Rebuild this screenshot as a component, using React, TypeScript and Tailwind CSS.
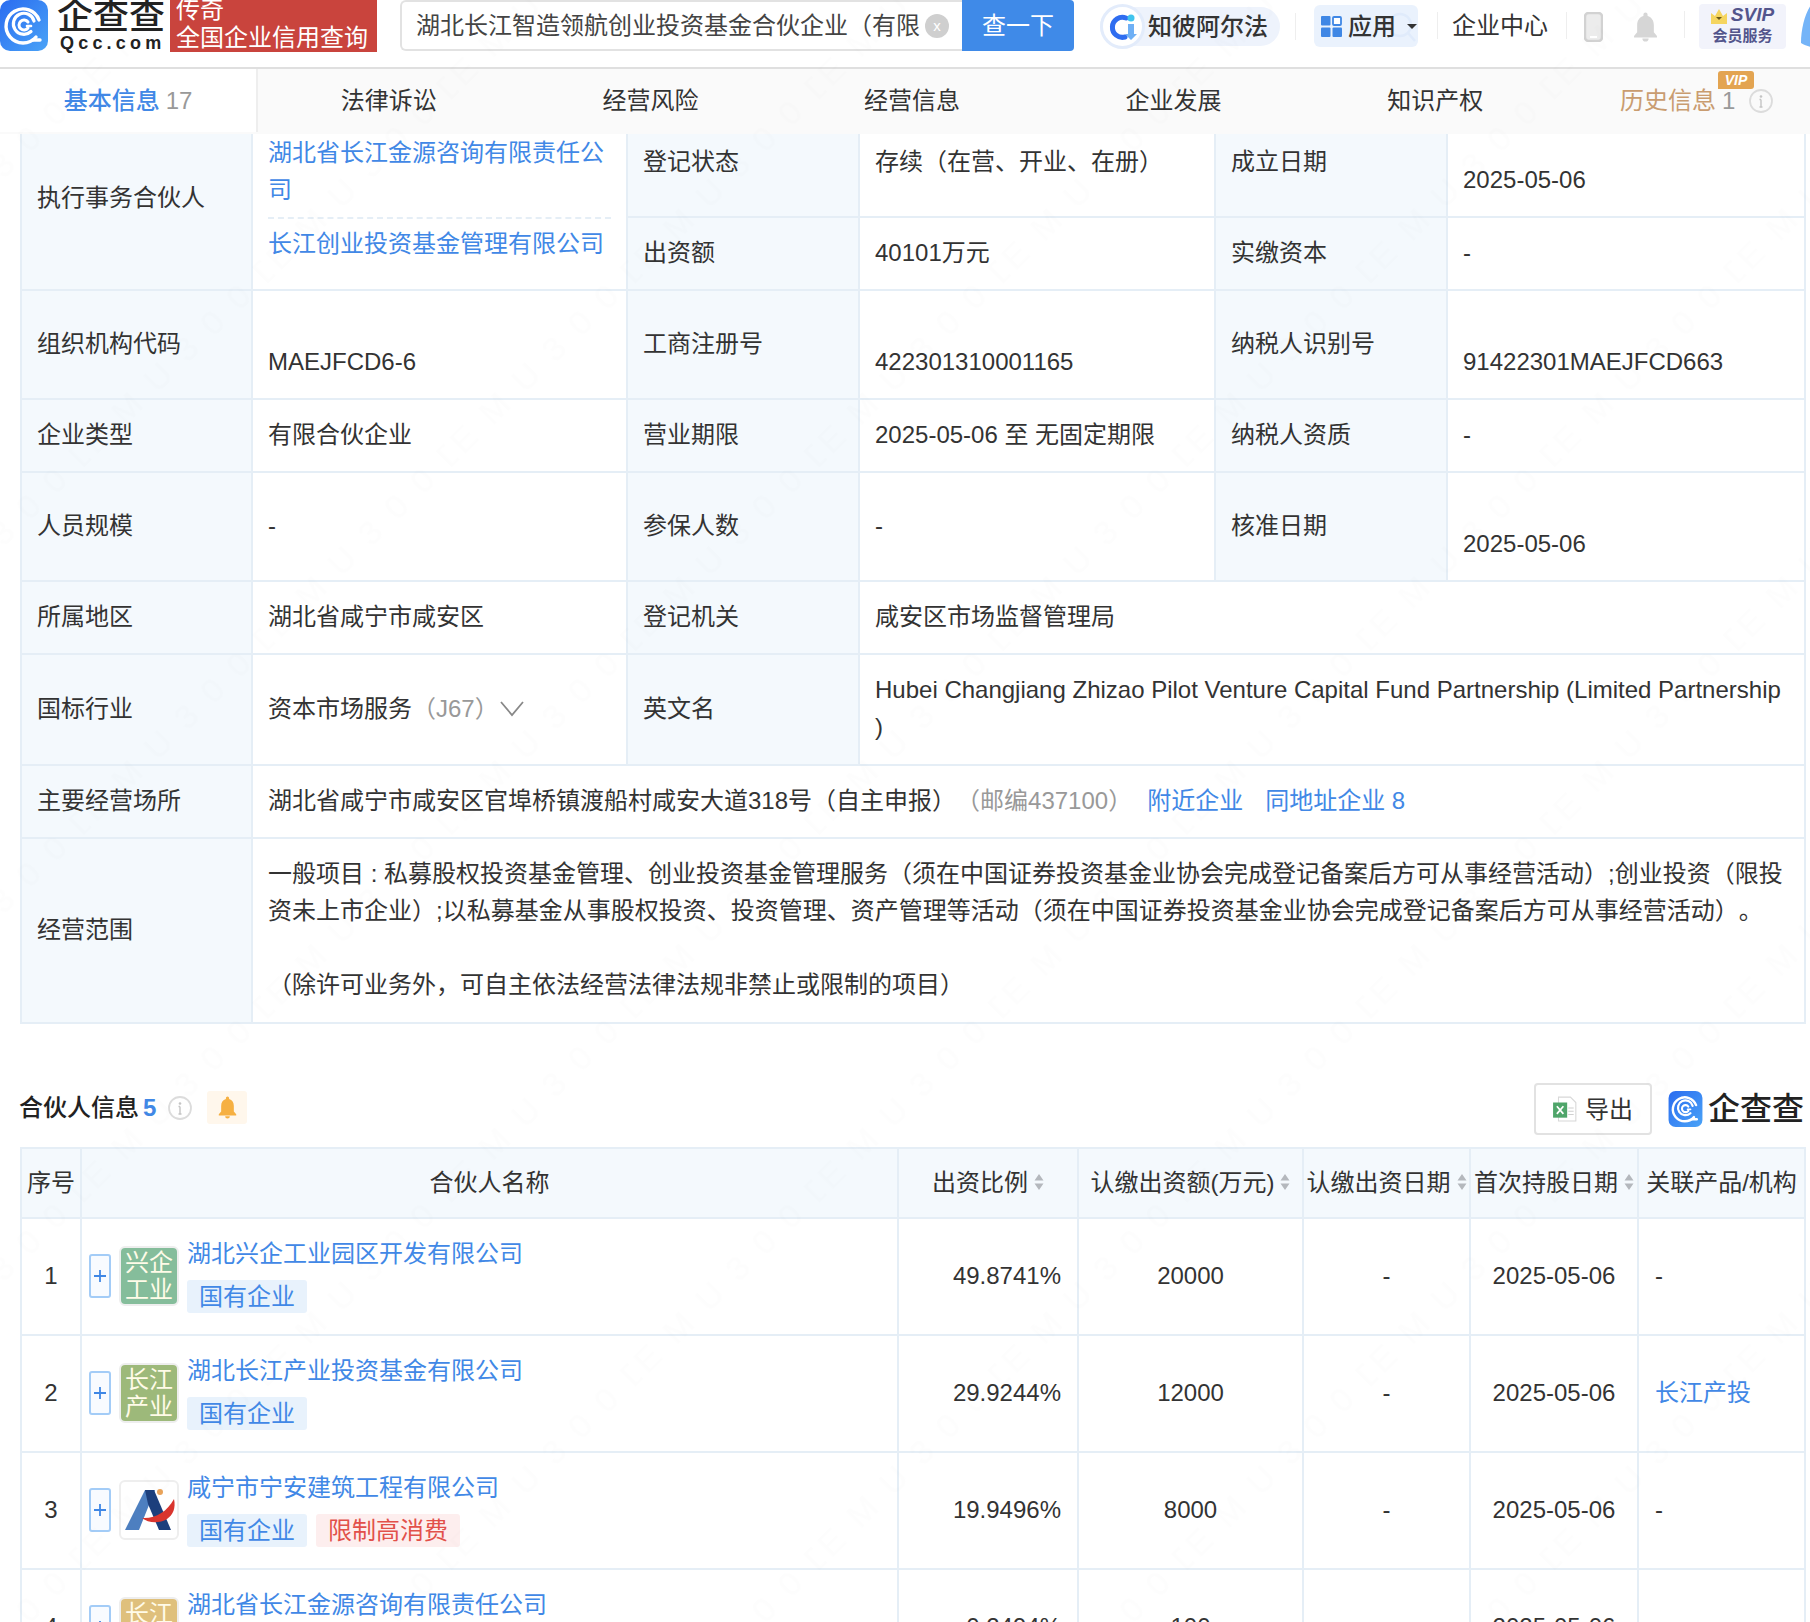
import React from "react";

const line = "border-2 border-[#e5eef6]";
const cell = "border-2 border-[#e5eef6] pb-[2px]";
const lab = "border-2 border-[#e5eef6] bg-[#f4f9fd] px-[15px] pt-[16px] pb-[18px] text-left font-normal align-middle";
const val = "border-2 border-[#e5eef6] px-[15px] pt-[16px] pb-[18px] text-left font-normal align-middle";
const labTop = "border-2 border-t-0 border-[#e5eef6] bg-[#f4f9fd] px-[15px] pt-[9px] pb-0 text-left font-normal align-top";
const valTop = "border-2 border-t-0 border-[#e5eef6] px-[15px] pt-[9px] pb-0 text-left font-normal align-top";
const link = "text-[#4188e6]";

function QccIcon({ className }: { className: string }) {
  return (
    <svg viewBox="0 0 48 51" className={className}>
      <defs>
        <linearGradient id="qg" x1="0" y1="0" x2="1" y2="1">
          <stop offset="0" stopColor="#2a6cf0" />
          <stop offset="1" stopColor="#4aa3f7" />
        </linearGradient>
      </defs>
      <rect width="48" height="51" rx="10" fill="url(#qg)" />
      <g fill="none" stroke="#fff" strokeLinecap="round">
        <path d="M36 37 A17 17 0 1 1 39 20" strokeWidth="3.4" />
        <path d="M31 31.5 A10.5 10.5 0 1 1 34 21" strokeWidth="3.2" />
        <path d="M28 22 A5 5 0 1 0 28 28" strokeWidth="3" />
        <path d="M27 26 H31" strokeWidth="2.6" />
        <path d="M33 40 H40" strokeWidth="3.4" />
      </g>
    </svg>
  );
}

function BellIcon({ className }: { className: string }) {
  return (
    <svg viewBox="0 0 24 28" className={className} fill="currentColor">
      <path d="M12 0a2 2 0 0 0-2 2v1.4C6 4.6 4 8 4 12v7l-3 3.6V24h22v-1.4L20 19v-7c0-4-2-7.400-6-8.600V2a2 2 0 0 0-2-2zM9 25a3 3 0 0 0 6 0z" />
    </svg>
  );
}

function InfoIcon({ className }: { className: string }) {
  return (
    <svg viewBox="0 0 24 24" className={className} fill="none">
      <circle cx="12" cy="12" r="11" stroke="#dcdcdc" strokeWidth="1.8" />
      <circle cx="12" cy="7.500" r="1.300" fill="#c4c4c4" />
      <path d="M12 10.500V18M10.500 10.500H12M10.500 18H13.500" stroke="#c4c4c4" strokeWidth="1.400" />
    </svg>
  );
}

function Sort() {
  return (
    <svg viewBox="0 0 10 20" className="h-5 w-[10px] shrink-0" fill="#b4b8bd">
      <path d="M5 2 9.500 8.500H.5zM5 18 .5 11.500H9.500z" />
    </svg>
  );
}

function Divider({ className }: { className: string }) {
  return <div className={className} />;
}

function Header() {
  return (
    <header className="flex h-[69px] items-start border-b-2 border-[#dfdfdf] bg-white">
      <QccIcon className="h-[51px] w-[48px] shrink-0" />
      <div className="ml-[9px] flex w-[108px] shrink-0 flex-col items-start text-[#222]">
        <span className="text-[36px] leading-[34px] font-medium whitespace-nowrap">企查查</span>
        <span className="mt-[1px] ml-[3px] text-[18px] leading-[16px] font-bold tracking-[4.200px] whitespace-nowrap">Qcc.com</span>
      </div>
      <div className="ml-[5px] flex h-[52px] w-[207px] shrink-0 flex-col justify-end overflow-hidden bg-[#c9443d] pl-[6px] text-[24px] leading-[30px] text-white">
        <span className="mb-[-2px]">传奇</span>
        <span className="mb-[-1px] whitespace-nowrap">全国企业信用查询</span>
      </div>
      <div className="ml-[23px] flex h-[51px] w-[562px] shrink-0 items-center rounded-l-[6px] border-2 border-r-0 border-[#e2e2e2] pl-[14px]">
        <div className="w-[504px] overflow-hidden text-[24px] whitespace-nowrap text-[#444]">湖北长江智造领航创业投资基金合伙企业（有限合伙）</div>
        <div className="ml-[5px] flex h-6 w-6 items-center justify-center rounded-full bg-[#cfcfcf] text-[15px] leading-none text-white">x</div>
      </div>
      <div className="flex h-[51px] w-[112px] shrink-0 items-center justify-center rounded-r-[4px] bg-[#3f8ae8] text-[24px] text-white">查一下</div>
      <div className="mt-[7px] ml-[26px] flex h-[39px] w-[180px] shrink-0 items-center rounded-full bg-[#eef3fc] text-[24px] font-medium whitespace-nowrap text-[#333]">
        <div className="flex h-[45px] w-[45px] shrink-0 items-center justify-center rounded-full border-[3px] border-[#e3ecfb] bg-white">
          <svg viewBox="0 0 30 30" className="h-[30px] w-[30px]">
            <path d="M18 6A10 10 0 1 0 17 25" fill="none" stroke="#2f6df0" strokeWidth="5" strokeLinecap="round" />
            <circle cx="23" cy="6" r="3.500" fill="#3fc4ee" />
            <path d="M20 12h6v10l3 0-6 6-6-6 3 0z" fill="#6fb0f5" />
          </svg>
        </div>
        <span className="ml-[3px]">知彼阿尔法</span>
      </div>
      <Divider className="mt-[13px] ml-[15px] h-[27px] w-px shrink-0 bg-[#eeeeee]" />
      <div className="relative mt-[5px] ml-[18px] flex h-[42px] w-[104px] shrink-0 items-center rounded-[6px] bg-[#eaf2fd] pl-[7px] text-[24px] font-medium text-[#333]">
        <svg viewBox="0 0 30 32" className="absolute top-[7px] left-[73px] h-[32px] w-[30px]" fill="none" stroke="#e0ebfb" strokeWidth="2.500">
          <circle cx="13" cy="13" r="11" />
          <path d="M21 21l7 8" />
        </svg>
        <svg viewBox="0 0 21 21" className="relative h-[21px] w-[21px] shrink-0">
          <rect x="0" y="0" width="9.500" height="9.500" rx="1" fill="#3f87e5" />
          <rect x="12" y="1" width="8" height="8" rx="1" fill="#fff" stroke="#3f87e5" strokeWidth="1.800" />
          <rect x="0" y="11.500" width="9.500" height="9.500" rx="1" fill="#3f87e5" />
          <rect x="11.500" y="11.500" width="9.500" height="9.500" rx="1" fill="#3f87e5" />
        </svg>
        <span className="relative ml-[6px]">应用</span>
        <svg viewBox="0 0 10 5" className="relative ml-[11px] h-[5px] w-[10px]" fill="#333"><path d="M0 0h10L5 5z" /></svg>
      </div>
      <Divider className="mt-[12px] ml-[19px] h-[27px] w-px shrink-0 bg-[#eeeeee]" />
      <span className="ml-[14px] shrink-0 text-[24px] leading-[52px] whitespace-nowrap text-[#333]">企业中心</span>
      <Divider className="mt-[12px] ml-[18px] h-[27px] w-px shrink-0 bg-[#eeeeee]" />
      <svg viewBox="0 0 19 30" className="mt-[12px] ml-[17px] h-[30px] w-[19px] shrink-0">
        <rect x="1" y="1" width="17" height="28" rx="3.500" fill="#ececec" stroke="#d2d2d2" strokeWidth="2.500" />
        <path d="M6 25h7" stroke="#fff" strokeWidth="2" />
      </svg>
      <BellIcon className="mt-[12px] ml-[30px] h-[30px] w-[25px] shrink-0 text-[#d6d6d6]" />
      <Divider className="mt-[11px] ml-[26px] h-[27px] w-px shrink-0 bg-[#eeeeee]" />
      <div className="mt-[4px] ml-[14px] flex h-[45px] w-[87px] shrink-0 flex-col items-center rounded-[4px] bg-[#f2f3fb] text-[#53558c]">
        <div className="flex h-[22px] items-center">
          <svg viewBox="0 0 16 15" className="mt-[2px] h-[15px] w-[16px]">
            <path d="M0 4 4 7 8 0 12 7 16 4V15H0z" fill="#f5d560" />
            <path d="M5 8h6L8 11z" fill="#6a5a1a" />
          </svg>
          <span className="ml-[4px] text-[19px] leading-[22px] font-bold italic">SVIP</span>
        </div>
        <span className="text-[15px] leading-[20px] font-bold whitespace-nowrap">会员服务</span>
      </div>
      <svg viewBox="0 0 10 42" className="mt-[5px] ml-[15px] h-[42px] w-[10px] shrink-0">
        <path d="M10 0C4 8 0 24 0 38c3 2 7 3 10 4z" fill="#74b4f8" />
      </svg>
    </header>
  );
}

function Tabs() {
  const tabs = ["法律诉讼", "经营风险", "经营信息", "企业发展", "知识产权"];
  return (
    <nav className="flex h-[65px] overflow-hidden bg-[#fafafa] pb-[2px] text-[24px] text-[#333]">
      <div className="flex w-[258px] shrink-0 items-center justify-center gap-[6px] border-r-2 border-[#eeeeee] bg-white">
        <span className="font-medium text-[#4188e6]">基本信息</span>
        <span className="text-[#999]">17</span>
      </div>
      {tabs.map((t) => (
        <div key={t} className="flex w-[261.6px] shrink-0 items-center justify-center">{t}</div>
      ))}
      <div className="flex w-[261.6px] shrink-0 items-center pl-[54px]">
        <div className="relative flex items-center">
          <span className="text-[#c99c70]">历史信息</span>
          <span className="ml-[6px] text-[#999]">1</span>
          <InfoIcon className="ml-[14px] h-[24px] w-[24px]" />
          <span className="absolute top-[-11px] left-[98px] flex h-[18px] w-[36px] items-center justify-center rounded-[3px] rounded-bl-none bg-[#e3a451] text-[14px] leading-none font-bold text-white italic">VIP</span>
        </div>
      </div>
    </nav>
  );
}

function InfoTable() {
  return (
    <table className="ml-5 w-[1784px] table-fixed border-collapse">
      <colgroup>
        <col className="w-[231px]" /><col className="w-[375px]" /><col className="w-[232px]" />
        <col className="w-[356px]" /><col className="w-[232px]" /><col className="w-[358px]" />
      </colgroup>
      <tbody>
        <tr className="h-[83px]">
          <th rowSpan={2} className="border-2 border-t-0 border-[#e5eef6] bg-[#f4f9fd] px-[15px] pb-[28px] text-left font-normal align-middle">执行事务合伙人</th>
          <td rowSpan={2} className="border-2 border-t-0 border-[#e5eef6] px-[15px] pb-0 align-top">
            <div className={`border-b-2 border-dashed border-[#e5eef6] pb-[9px] ${link}`}>湖北省长江金源咨询有限责任公司</div>
            <div className={`mt-[6px] whitespace-nowrap ${link}`}>长江创业投资基金管理有限公司</div>
          </td>
          <th className={labTop}>登记状态</th>
          <td className={valTop}>存续（在营、开业、在册）</td>
          <th className={labTop}>成立日期</th>
          <td className={valTop}><div className="pt-[18px]">2025-05-06</div></td>
        </tr>
        <tr>
          <th className={lab}>出资额</th>
          <td className={val}>40101万元</td>
          <th className={lab}>实缴资本</th>
          <td className={val}>-</td>
        </tr>
        <tr>
          <th className={lab}>组织机构代码</th>
          <td className={val}><div className="pt-9">MAEJFCD6-6</div></td>
          <th className={lab}>工商注册号</th>
          <td className={val}><div className="pt-9">422301310001165</div></td>
          <th className={lab}>纳税人识别号</th>
          <td className={val}><div className="pt-9">91422301MAEJFCD663</div></td>
        </tr>
        <tr>
          <th className={lab}>企业类型</th>
          <td className={val}>有限合伙企业</td>
          <th className={lab}>营业期限</th>
          <td className={val}>2025-05-06 至 无固定期限</td>
          <th className={lab}>纳税人资质</th>
          <td className={val}>-</td>
        </tr>
        <tr>
          <th className={lab}>人员规模</th>
          <td className={val}>-</td>
          <th className={lab}>参保人数</th>
          <td className={val}>-</td>
          <th className={lab}>核准日期</th>
          <td className={val}><div className="pt-9">2025-05-06</div></td>
        </tr>
        <tr>
          <th className={lab}>所属地区</th>
          <td className={val}>湖北省咸宁市咸安区</td>
          <th className={lab}>登记机关</th>
          <td colSpan={3} className={val}>咸安区市场监督管理局</td>
        </tr>
        <tr>
          <th className={lab}>国标行业</th>
          <td className={val}>
            <div className="flex items-center whitespace-nowrap">
              资本市场服务<span className="text-[#999]">（J67）</span>
              <svg viewBox="0 0 24 16" className="ml-px h-4 w-6" fill="none" stroke="#888" strokeWidth="1.800"><path d="M1 1l11 13L23 1" /></svg>
            </div>
          </td>
          <th className={lab}>英文名</th>
          <td colSpan={3} className="border-2 border-[#e5eef6] px-[15px] pt-[16px] pb-[19px] text-left align-middle font-normal whitespace-nowrap">Hubei Changjiang Zhizao Pilot Venture Capital Fund Partnership (Limited Partnership<br />)</td>
        </tr>
        <tr>
          <th className={lab}>主要经营场所</th>
          <td colSpan={5} className={val}>
            湖北省咸宁市咸安区官埠桥镇渡船村咸安大道318号（自主申报）<span className="text-[#999]">（邮编437100）</span>
            <span className={`ml-[15px] ${link}`}>附近企业</span>
            <span className={`ml-[22px] ${link}`}>同地址企业 8</span>
          </td>
        </tr>
        <tr>
          <th className={lab}>经营范围</th>
          <td colSpan={5} className="border-2 border-[#e5eef6] px-[15px] pt-[16px] pb-[19px] text-left align-middle font-normal">
            一般项目 : 私募股权投资基金管理、创业投资基金管理服务（须在中国证券投资基金业协会完成登记备案后方可从事经营活动）;创业投资（限投资未上市企业）;以私募基金从事股权投资、投资管理、资产管理等活动（须在中国证券投资基金业协会完成登记备案后方可从事经营活动）。
            <br /><br />
            （除许可业务外，可自主依法经营法律法规非禁止或限制的项目）
          </td>
        </tr>
      </tbody>
    </table>
  );
}

function Tag({ red, children }: { red?: boolean; children: React.ReactNode }) {
  return red ? (
    <span className="flex h-[33px] items-center rounded-[3px] bg-[#fdeeee] px-3 text-[#e2504a]">{children}</span>
  ) : (
    <span className="flex h-[33px] items-center rounded-[3px] bg-[#e8f2fc] px-3 text-[#4188e6]">{children}</span>
  );
}

function TextLogo({ top, bottom, color }: { top: string; bottom: string; color: string }) {
  return (
    <div className="h-[60px] w-[60px] shrink-0 rounded-[6px] border-2 border-[#eeeeee] bg-white">
      <div className="flex h-full w-full flex-col items-center justify-center rounded-[4px] text-[24px] leading-[27px] text-[#fffbe8] whitespace-nowrap" style={{ backgroundColor: color }}>
        <span>{top}</span>
        <span>{bottom}</span>
      </div>
    </div>
  );
}

function ALogo() {
  return (
    <div className="h-[60px] w-[60px] shrink-0 rounded-[6px] border-2 border-[#eeeeee] bg-white">
      <svg viewBox="0 0 56 56" className="h-full w-full">
        <path d="M4 48 24 8 H34 L18 48z" fill="#4d7fc0" />
        <path d="M24 8 H33 L50 48 H38 L27 22z" fill="#1c3f7c" />
        <path d="M21 36C34 37 46 30 53 17 55 26 52 33 46 37 38 42 27 41 21 36z" fill="#d9352e" />
        <circle cx="39" cy="10" r="3" fill="#e9a35a" />
      </svg>
    </div>
  );
}

function PartnerRow({ n, logo, name, tags, pct, amount, date, rel }: {
  n: number; logo: React.ReactNode; name: string; tags: React.ReactNode; pct: string; amount: string; date: string; rel: React.ReactNode;
}) {
  return (
    <tr className="h-[117px]">
      <td className={`${cell} text-center`}>{n}</td>
      <td className={`${cell} pl-[7px]`}>
        <div className="flex items-center">
          <div className="flex h-[44px] w-[22px] shrink-0 items-center justify-center rounded-[3px] border-2 border-[#a3ccf7] bg-[#f8fbff]">
            <svg viewBox="0 0 12 12" className="h-3 w-3" stroke="#3f87e5" strokeWidth="1.800"><path d="M6 0v12M0 6h12" /></svg>
          </div>
          <div className="ml-2">{logo}</div>
          <div className="ml-2 flex flex-col items-start pb-[3px]">
            <span className={`whitespace-nowrap ${link}`}>{name}</span>
            <div className="mt-[8px] flex gap-[9px]">{tags}</div>
          </div>
        </div>
      </td>
      <td className={`${cell} pr-4 text-right`}>{pct}</td>
      <td className={`${cell} text-center`}>{amount}</td>
      <td className={`${cell} text-center`}>-</td>
      <td className={`${cell} text-center`}>{date}</td>
      <td className={`${cell} pl-4`}>{rel}</td>
    </tr>
  );
}

function SortHead({ children }: { children: React.ReactNode }) {
  return (
    <th className={`${cell} bg-[#f4f9fd] font-normal`}>
      <div className="flex items-center justify-center gap-[6px] whitespace-nowrap">{children}<Sort /></div>
    </th>
  );
}

function PartnerSection() {
  return (
    <section className="mt-[59px]">
      <div className="ml-[19px] flex h-[52px] w-[1785px] items-center">
        <div className="mb-[3px] flex items-center">
          <span className="font-medium text-[#222]">合伙人信息</span>
          <span className="ml-[4px] font-bold text-[#4188e6]">5</span>
          <InfoIcon className="ml-[12px] h-[24px] w-[24px]" />
          <div className="ml-[15px] flex h-[33px] w-[40px] items-center justify-center rounded-[3px] bg-[#fff7ec]">
            <BellIcon className="h-[23px] w-[19px] text-[#f6b042]" />
          </div>
        </div>
        <div className="ml-auto flex h-[52px] w-[118px] items-center justify-center rounded-[4px] border-2 border-[#e2e2e2]">
          <svg viewBox="0 0 22 24" className="h-[26px] w-[24px]">
            <path d="M5 1h11l5 5v17H5z" fill="#fff" stroke="#d8d8d8" />
            <path d="M14 11h5M14 14h5M14 17h5" stroke="#d0d0d0" />
            <rect x="0" y="6" width="13" height="14" fill="#4fa56a" />
            <path d="M3.500 9.500l6 7M9.500 9.500l-6 7" stroke="#fff" strokeWidth="1.600" />
          </svg>
          <span className="ml-[8px]">导出</span>
        </div>
        <QccIcon className="ml-4 h-9 w-[35px]" />
        <span className="ml-[5px] text-[32px] leading-none font-medium whitespace-nowrap text-[#222]">企查查</span>
      </div>
      <table className="mt-3 ml-5 w-[1784px] table-fixed border-collapse">
        <colgroup>
          <col className="w-[60px]" /><col className="w-[817px]" /><col className="w-[180px]" /><col className="w-[225px]" />
          <col className="w-[167px]" /><col className="w-[168px]" /><col className="w-[167px]" />
        </colgroup>
        <thead>
          <tr className="h-[70px]">
            <th className={`${cell} bg-[#f4f9fd] font-normal`}>序号</th>
            <th className={`${cell} bg-[#f4f9fd] font-normal`}>合伙人名称</th>
            <SortHead>出资比例</SortHead>
            <SortHead>认缴出资额(万元)</SortHead>
            <SortHead>认缴出资日期</SortHead>
            <SortHead>首次持股日期</SortHead>
            <th className={`${cell} bg-[#f4f9fd] font-normal whitespace-nowrap`}>关联产品/机构</th>
          </tr>
        </thead>
        <tbody>
          <PartnerRow n={1} logo={<TextLogo top="兴企" bottom="工业" color="#85bd9b" />} name="湖北兴企工业园区开发有限公司" tags={<Tag>国有企业</Tag>} pct="49.8741%" amount="20000" date="2025-05-06" rel="-" />
          <PartnerRow n={2} logo={<TextLogo top="长江" bottom="产业" color="#9db97a" />} name="湖北长江产业投资基金有限公司" tags={<Tag>国有企业</Tag>} pct="29.9244%" amount="12000" date="2025-05-06" rel={<span className={link}>长江产投</span>} />
          <PartnerRow n={3} logo={<ALogo />} name="咸宁市宁安建筑工程有限公司" tags={<><Tag>国有企业</Tag><Tag red>限制高消费</Tag></>} pct="19.9496%" amount="8000" date="2025-05-06" rel="-" />
          <PartnerRow n={4} logo={<TextLogo top="长江" bottom="金源" color="#dfc07c" />} name="湖北省长江金源咨询有限责任公司" tags={<Tag>国有企业</Tag>} pct="0.2494%" amount="100" date="2025-05-06" rel="-" />
        </tbody>
      </table>
    </section>
  );
}

export default function App() {
  return (
    <div className="relative h-[1622px] w-[1810px] overflow-hidden bg-white font-['Liberation_Sans','Noto_Sans_CJK_SC',sans-serif] text-[24px] leading-[37px] text-[#333] [text-spacing-trim:space-all]">
      <Header />
      <Tabs />
      <InfoTable />
      <PartnerSection />
      <svg className="pointer-events-none absolute inset-0 h-full w-full" aria-hidden="true">
        <defs>
          <pattern id="wm" width="260" height="260" patternUnits="userSpaceOnUse" patternTransform="rotate(-45)">
            <text x="6" y="130" fontSize="34" letterSpacing="18" fill="#000" fillOpacity="0.008">EMU300D</text>
          </pattern>
        </defs>
        <rect width="100%" height="100%" fill="url(#wm)" />
      </svg>
    </div>
  );
}
